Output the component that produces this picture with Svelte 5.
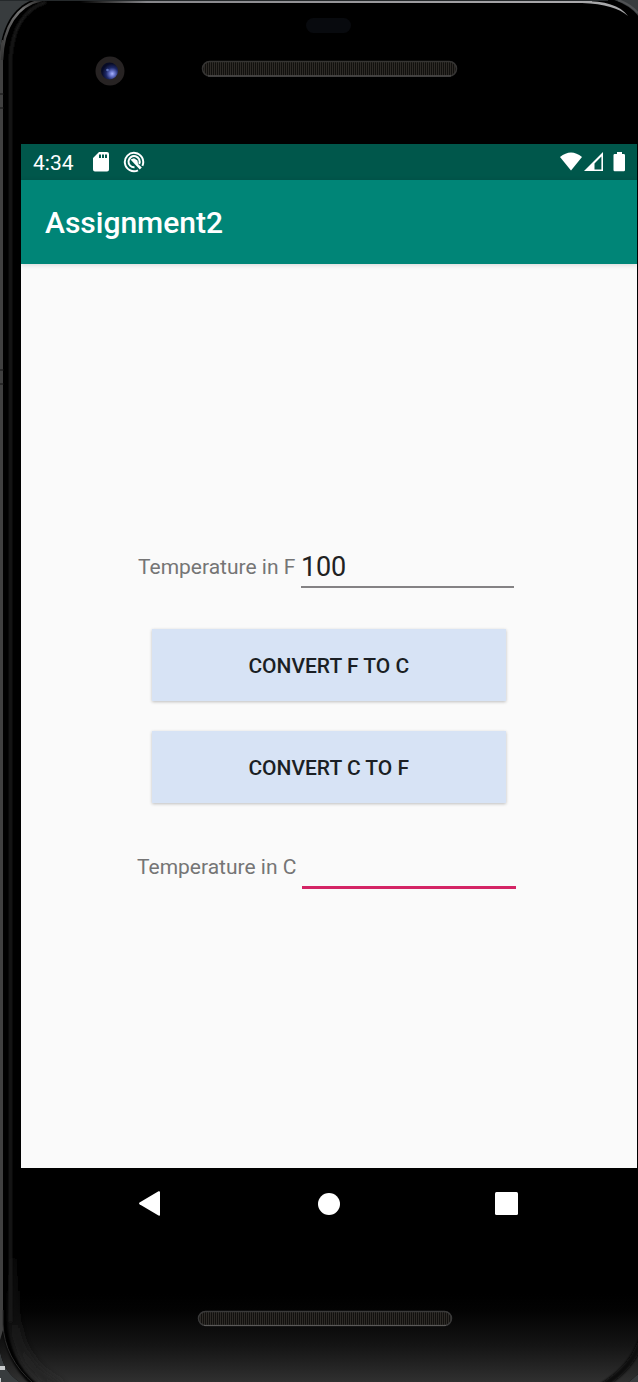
<script>
  let fahrenheit = $state('100');
  let celsius = $state('');

  function toCelsius() {
    celsius = String(((Number(fahrenheit) - 32) * 5) / 9);
  }

  function toFahrenheit() {
    fahrenheit = String((Number(celsius) * 9) / 5 + 32);
  }
</script>

<div class="device">
  <svg class="shell" width="638" height="1382" viewBox="0 0 638 1382" aria-hidden="true">
    <defs>
      <linearGradient id="chin" x1="0" y1="0" x2="0" y2="1">
        <stop offset="0" stop-color="#000" />
        <stop offset="0.2" stop-color="#030303" />
        <stop offset="0.6" stop-color="#151515" />
        <stop offset="1" stop-color="#303030" />
      </linearGradient>
      <linearGradient id="glow" x1="0" y1="1240" x2="0" y2="1382" gradientUnits="userSpaceOnUse">
        <stop offset="0" stop-color="#161616" stop-opacity="0" />
        <stop offset="0.5" stop-color="#161616" />
        <stop offset="1" stop-color="#262626" />
      </linearGradient>
      <linearGradient id="shine" x1="80" y1="0" x2="638" y2="0" gradientUnits="userSpaceOnUse">
        <stop offset="0" stop-color="#888" stop-opacity="0" />
        <stop offset="0.12" stop-color="#858589" />
        <stop offset="0.9" stop-color="#aaa9ac" />
        <stop offset="1" stop-color="#777" />
      </linearGradient>
      <linearGradient id="corner" x1="0" y1="1" x2="1" y2="0">
        <stop offset="0" stop-color="#333" />
        <stop offset="0.65" stop-color="#777" />
        <stop offset="1" stop-color="#222" />
      </linearGradient>
      <radialGradient id="lens" cx="0.66" cy="0.66" r="0.6">
        <stop offset="0" stop-color="#a9b4ff" />
        <stop offset="0.25" stop-color="#6874c9" />
        <stop offset="0.6" stop-color="#1d2866" />
        <stop offset="1" stop-color="#070b25" />
      </radialGradient>
      <pattern id="mesh" width="2" height="2" patternUnits="userSpaceOnUse">
        <rect width="2" height="2" fill="#11100e" />
        <path d="M0 0h1v2H0z" fill="#2e2b27" />
      </pattern>
      <filter id="soft" x="-20" y="-20" width="680" height="1440" filterUnits="userSpaceOnUse">
        <feGaussianBlur stdDeviation="1.1" />
      </filter>
      <filter id="wide" x="-20" y="-20" width="680" height="1440" filterUnits="userSpaceOnUse">
        <feGaussianBlur stdDeviation="4" />
      </filter>
      <clipPath id="body">
        <path d="M0 52C2 24 16 3 39 -2H608Q630 4 640 18V1372Q634 1378 626 1384H23Q4 1374 0 1351Z" />
      </clipPath>
    </defs>

    <rect width="638" height="1382" fill="#383c3e" />
    <path d="M0 1366h5v4H0zM0 1378h1v4H0z" fill="#c8cacb" />
    <g clip-path="url(#body)">
      <rect width="638" height="1382" fill="#000" />
      <rect y="1294" width="638" height="88" fill="url(#chin)" />
      <path d="M13 1240V1312Q16 1366 60 1388" fill="none" stroke="url(#glow)" stroke-width="9" filter="url(#wide)" />
      <path d="M643 1335Q634 1368 600 1387" fill="none" stroke="#080808" stroke-width="6" filter="url(#soft)" />
      <path d="M10.500 1322V60C12 27 25 9 46 2" fill="none" stroke="#1d1d1d" stroke-width="3" filter="url(#soft)" />
      <path d="M4.500 60V1318Q6 1362 36 1386" fill="none" stroke="#040404" stroke-width="5" filter="url(#soft)" />
      <path d="M0 40H3V1330L0 1340Z" fill="#404040" />
      <path d="M3 1310V1324Q4 1358 34 1384" fill="none" stroke="#2c2c2c" stroke-width="1" />
    </g>
    <path d="M2 60C3 27 17 5 42 0" fill="none" stroke="url(#corner)" stroke-width="2.500" />
    <path d="M0 94h4M0 108h4M0 370h4M0 384h4" stroke="#111" />
    <path d="M0 .5H608" stroke="#25292b" />
    <path d="M80 2H592" stroke="url(#shine)" stroke-width="2" />
    <path d="M582 1C605 1 620 5 628 16C619 8 605 4 582 3Z" fill="#a8a8aa" />
    <path d="M618 0Q630 4 638 13" fill="none" stroke="#505254" stroke-width="2" />

    <rect x="306" y="18" width="45" height="15" rx="7.500" fill="#080a0e" />
    <circle cx="110" cy="71" r="14.500" fill="#272323" />
    <circle cx="109.500" cy="71" r="8.500" fill="url(#lens)" />
    <circle cx="107.500" cy="70" r="1.300" fill="#5d72b9" />
    <g fill="url(#mesh)">
      <rect x="202.500" y="61.500" width="254" height="14.500" rx="7.250" stroke="#353433" stroke-width="1.500" />
      <rect x="198.500" y="1311.500" width="253" height="14" rx="7" stroke="#393939" stroke-width="1.500" />
    </g>
    <path d="M208 76H451M204 1325.500H446" stroke="#5a5958" />
  </svg>

  <main class="screen">
    <header class="status">
      <span class="clock">4:34</span>
      <svg class="sd" width="16" height="20" viewBox="0 0 16 20" aria-label="SD card">
        <path fill="#fff" fill-rule="evenodd" d="M6 0H14Q16 0 16 2V17.500Q16 19.500 14 19.500H2Q0 19.500 0 17.500V6ZM6 2.500V6H8V2.500ZM9 2.500V6H11V2.500ZM12 2.500V6H14V2.500Z" />
      </svg>
      <svg class="sync" width="22" height="22" viewBox="0 0 22 22" aria-label="Notification">
        <path d="M15 19.300A9.200 9.200 0 1 1 19.400 14.800" fill="none" stroke="#fff" stroke-width="2" />
        <path d="M11.500 16.300A5.600 5.600 0 1 1 16.200 13" fill="none" stroke="#fff" stroke-width="2" />
        <path d="M7.500 8.500 11 7.300 14.500 9.500 15 13 18.800 16.500 16.800 18.500Z" fill="#fff" />
      </svg>
      <span class="spacer"></span>
      <svg width="66" height="20" viewBox="0 0 66 20" aria-label="Wi-Fi, signal and battery">
        <path fill="#fff" d="M0 5Q11 -4 22 5L11 18.500Z" />
        <path fill="#fff" fill-rule="evenodd" d="M24 19 43 0V19ZM34.500 11.500V17.400H41.400V4.600Z" />
        <path fill="#fff" d="M57 0H62V2H63.800Q65 2 65 3.200V18Q65 19.200 63.800 19.200H54.700Q53.500 19.200 53.500 18V3.200Q53.500 2 54.700 2H57Z" />
      </svg>
    </header>

    <h1 class="appbar">Assignment2</h1>

    <section class="content">
      <label class="field">
        <span>Temperature in F</span>
        <input type="text" bind:value={fahrenheit} />
      </label>
      <div class="actions">
        <button onclick={toCelsius}>CONVERT F TO C</button>
        <button onclick={toFahrenheit}>CONVERT C TO F</button>
      </div>
      <label class="field active">
        <span>Temperature in C</span>
        <input type="text" bind:value={celsius} />
      </label>
    </section>

    <nav class="navbar">
      <svg width="22" height="25" viewBox="0 0 22 25" aria-label="Back"><path fill="#fff" d="M.5 11.500 19.500.3Q21 0 21 1V24Q21 25 19.500 24.500L.5 13.300Q-.3 12.400.5 11.500Z" /></svg>
      <svg width="24" height="22" viewBox="0 0 24 22" aria-label="Home"><circle cx="13" cy="11" r="11" fill="#fff" /></svg>
      <svg width="23" height="23" viewBox="0 0 23 23" aria-label="Recents"><rect width="23" height="23" rx="1.500" fill="#fff" /></svg>
    </nav>
  </main>
</div>

<style>
  :global(body) {
    margin: 0;
    background: #000;
  }
  .device {
    position: relative;
    box-sizing: border-box;
    width: 638px;
    height: 1382px;
    padding: 144px 1px 142px 21px;
    overflow: hidden;
    font-family: Roboto, sans-serif;
  }
  svg {
    display: block;
    flex: none;
  }
  .shell {
    position: absolute;
    inset: 0;
  }
  .screen {
    position: relative;
    display: flex;
    flex-direction: column;
    height: 1096px;
  }
  .status {
    box-sizing: border-box;
    display: flex;
    align-items: center;
    height: 36px;
    padding: 0 11px 0 12px;
    background: #00574b;
    color: #fff;
  }
  .clock {
    width: 60px;
    font-size: 21px;
    line-height: 36px;
    padding-top: 1px;
  }
  .sync {
    margin-left: 14px;
  }
  .spacer {
    flex: 1;
  }
  .appbar {
    z-index: 1;
    box-sizing: border-box;
    height: 84px;
    margin: 0;
    padding: 0 24px;
    background: #008577;
    box-shadow: 0 1px 5px rgba(0, 0, 0, 0.15);
    color: #fff;
    font-size: 30px;
    font-weight: 500;
    line-height: 86px;
  }
  .content {
    box-sizing: border-box;
    flex: 1;
    padding: 275px 121px 0 117px;
    background: #fafafa;
  }
  .field {
    display: flex;
    height: 49px;
    color: #757575;
    font-size: 21px;
    line-height: 57px;
  }
  .field span {
    width: 163px;
    white-space: nowrap;
  }
  .field input {
    box-sizing: border-box;
    width: 213px;
    height: 49px;
    margin: 0;
    padding: 8px 0 0;
    border: 0;
    border-bottom: 2px solid #848284;
    border-radius: 0;
    outline: 0;
    background: transparent;
    color: #212121;
    font: 400 27px Roboto, sans-serif;
    letter-spacing: -0.2px;
  }
  .field.active {
    width: 379px;
    margin: 36px 0 0 -1px;
    height: 50px;
  }
  .field.active span {
    width: 165px;
  }
  .field.active input {
    width: 214px;
    height: 50px;
    border-bottom: 3px solid #d42465;
  }
  .actions {
    display: flex;
    flex-direction: column;
    gap: 30px;
    padding: 41px 9px 0 13.5px;
  }
  button {
    width: 354.5px;
    height: 72px;
    margin: 0;
    padding: 2px 0 0;
    border: 0;
    border-radius: 0;
    background: #d7e3f5;
    box-shadow: 0 1px 3px rgba(0, 0, 0, 0.24);
    color: #1b1f24;
    font: 500 21px Roboto, sans-serif;
  }
  .navbar {
    box-sizing: border-box;
    display: flex;
    align-items: center;
    justify-content: space-between;
    height: 72px;
    padding: 0 119px 1px 118px;
    background: #000;
  }
</style>
